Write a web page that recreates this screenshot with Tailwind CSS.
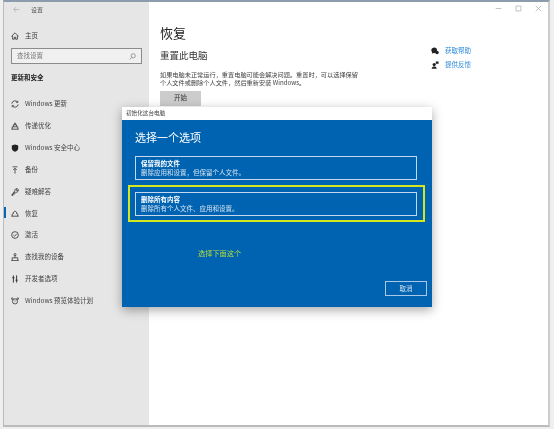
<!DOCTYPE html>
<html lang="zh-CN">
<head>
    <meta charset="UTF-8">
    <title>设置</title>
    <script src="https://cdn.jsdelivr.net/npm/@tailwindcss/browser@4"></script>
</head>
<body class="w-[554px] h-[429px] overflow-hidden bg-[#efefef] font-['Noto_Sans_CJK_SC','Noto_Sans',sans-serif] text-[#333]">

<!-- Settings window -->
<div class="relative ml-[3px] w-[547px] h-[427px] flex border-t-2 border-t-[#8d9bae] border-l border-l-[#bbb] border-r-2 border-r-[#ccc] border-b-2 border-b-[#bbb] bg-white blur-[0.35px]">

    <!-- Sidebar -->
    <aside class="w-[145px] shrink-0 bg-[#e6e6e6] flex flex-col">
        <div class="flex items-center h-[13px] mt-px pl-[9px] text-[6px] text-[#555]">
            <svg class="w-[7px] h-[7px] text-[#aaa]" viewBox="0 0 10 10" fill="none" stroke="currentColor" stroke-width="1"><path d="M9 5H1M4.500 1.500 1 5l3.500 3.500"/></svg>
            <span class="ml-[11px]">设置</span>
        </div>
        <div class="flex items-center gap-[6px] mt-[13px] pl-[7px] h-[14px] text-[6.500px]">
            <svg class="w-[8px] h-[8px] text-[#333]" viewBox="0 0 10 10" fill="none" stroke="currentColor" stroke-width="1"><path d="M.5 5.500 5 1l4.500 4.500M2 4.500V9h2.200V6.500h1.600V9H8V4.500"/></svg>
            <span>主页</span>
        </div>
        <div class="mx-[7px] mt-[5px] h-[16px] border border-[#8c8c8c] bg-[#f0f0f0] flex items-center justify-between px-[5px] text-[6.500px] text-[#777]">
            <span>查找设置</span>
            <svg class="w-[7px] h-[7px] text-[#777]" viewBox="0 0 10 10" fill="none" stroke="currentColor" stroke-width="1"><circle cx="6" cy="4" r="3"/><path d="M4 6.200 1 9.200"/></svg>
        </div>
        <div class="pl-[7px] mt-[8px] h-[12px] flex items-center text-[6.500px] font-bold text-[#222]">更新和安全</div>

        <nav class="mt-[9px] flex flex-col text-[6.500px] text-[#444]">
            <div class="relative h-[21.900px] pl-[7px] flex items-center gap-[6px]">
                <svg class="w-[8px] h-[8px] text-[#333]" viewBox="0 0 10 10" fill="none" stroke="currentColor" stroke-width="1"><path d="M1 4.500A4 4 0 0 1 8.300 2.800M9 5.500A4 4 0 0 1 1.700 7.200M8.500 1v2h-2M1.500 9V7h2"/></svg>
                <span>Windows 更新</span>
            </div>
            <div class="relative h-[21.900px] pl-[7px] flex items-center gap-[6px]">
                <svg class="w-[8px] h-[8px] text-[#333]" viewBox="0 0 10 10" fill="none" stroke="currentColor" stroke-width="1"><path d="M.5 9h9M1.500 9V6h7v3M3 6V3.500h4V6M4 3.500 5 1l1 2.500"/></svg>
                <span>传递优化</span>
            </div>
            <div class="relative h-[21.900px] pl-[7px] flex items-center gap-[6px]">
                <svg class="w-[8px] h-[8px] text-[#222]" viewBox="0 0 10 10" fill="currentColor"><path d="M5 .5 9 2v3.200C9 7.500 7.200 9 5 9.700 2.800 9 1 7.500 1 5.200V2z"/></svg>
                <span>Windows 安全中心</span>
            </div>
            <div class="relative h-[21.900px] pl-[7px] flex items-center gap-[6px]">
                <svg class="w-[8px] h-[8px] text-[#333]" viewBox="0 0 10 10" fill="none" stroke="currentColor" stroke-width="1"><path d="M2 1h6M5 9.500V3M2.800 5 5 2.800 7.200 5"/></svg>
                <span>备份</span>
            </div>
            <div class="relative h-[21.900px] pl-[7px] flex items-center gap-[6px]">
                <svg class="w-[8px] h-[8px] text-[#333]" viewBox="0 0 10 10" fill="none" stroke="currentColor" stroke-width="1"><path d="M1 9 5.200 4.800M4.800 3.500A2.500 2.500 0 0 1 8 .8L6.500 2.500l1 1L9.200 2A2.500 2.500 0 0 1 6.500 5.200L2.500 9.300 1 9z"/></svg>
                <span>疑难解答</span>
            </div>
            <div class="relative h-[21.900px] pl-[7px] flex items-center gap-[6px]">
                <div class="absolute left-0 top-[5px] w-[2px] h-[11px] bg-[#0067b8]"></div>
                <svg class="w-[8px] h-[8px] text-[#333]" viewBox="0 0 10 10" fill="none" stroke="currentColor" stroke-width="1"><path d="M.5 9h9M1.500 9V6.500L3 5.500M8.500 9V6.500L7 5.500M3 6A2.200 2.200 0 1 1 7 6"/></svg>
                <span>恢复</span>
            </div>
            <div class="relative h-[21.900px] pl-[7px] flex items-center gap-[6px]">
                <svg class="w-[8px] h-[8px] text-[#333]" viewBox="0 0 10 10" fill="none" stroke="currentColor" stroke-width="1"><circle cx="5" cy="5" r="4.200"/><path d="M3 5.200 4.500 6.500 7.200 3.500"/></svg>
                <span>激活</span>
            </div>
            <div class="relative h-[21.900px] pl-[7px] flex items-center gap-[6px]">
                <svg class="w-[8px] h-[8px] text-[#333]" viewBox="0 0 10 10" fill="none" stroke="currentColor" stroke-width="1"><path d="M.5 9.500h9M1.500 9.500V6h7v3.500M5 6V3"/><circle cx="5" cy="2" r="1.300"/></svg>
                <span>查找我的设备</span>
            </div>
            <div class="relative h-[21.900px] pl-[7px] flex items-center gap-[6px]">
                <svg class="w-[8px] h-[8px] text-[#333]" viewBox="0 0 10 10" fill="none" stroke="currentColor" stroke-width="1.200"><path d="M3 .5v9M7 .5v9M1.500 3.500h3M5.500 6.500h3"/></svg>
                <span>开发者选项</span>
            </div>
            <div class="relative h-[21.900px] pl-[7px] flex items-center gap-[6px]">
                <svg class="w-[8px] h-[8px] text-[#333]" viewBox="0 0 10 10" fill="none" stroke="currentColor" stroke-width="1"><circle cx="5" cy="5.500" r="3.200"/><circle cx="1.500" cy="2" r="1"/><circle cx="8.500" cy="2" r="1"/><path d="M3.500 5h.8M5.700 5h.8"/></svg>
                <span>Windows 预览体验计划</span>
            </div>
        </nav>
    </aside>

    <!-- Main panel -->
    <main class="flex-1 pl-[11px] relative">
        <div class="flex justify-end gap-[13px] pr-[6px] pt-[3px] text-[#aaa]">
            <svg class="w-[7px] h-[7px]" viewBox="0 0 10 10" fill="none" stroke="currentColor" stroke-width="1"><path d="M1 5h8"/></svg>
            <svg class="w-[7px] h-[7px]" viewBox="0 0 10 10" fill="none" stroke="currentColor" stroke-width="1"><path d="M1.500 1.500h7v7h-7z"/></svg>
            <svg class="w-[7px] h-[7px]" viewBox="0 0 10 10" fill="none" stroke="currentColor" stroke-width="1"><path d="M1 1l8 8M9 1 1 9"/></svg>
        </div>
        <div class="flex mt-[11px]">
            <div class="w-[271px]">
                <h1 class="text-[13px] leading-[19px] text-[#222]">恢复</h1>
                <h2 class="mt-[6px] text-[9.500px] leading-[14px] text-[#333]">重置此电脑</h2>
                <p class="mt-[9px] text-[6.200px] leading-[8.300px] whitespace-nowrap text-[#444]">如果电脑未正常运行&#65292;重置电脑可能会解决问题。重置时&#65292;可以选择保留<br>个人文件或删除个人文件&#65292;然后重新安装 Windows。</p>
                <button class="block mt-[3px] w-[41px] h-[15px] bg-[#cccccc] text-[6.500px] text-[#333]">开始</button>
            </div>
            <div class="mt-[21px] text-[6.500px] text-[#2b88d8]">
                <div class="flex items-center h-[14px] gap-[6px]">
                    <svg class="w-[8px] h-[8px] text-[#222]" viewBox="0 0 10 10" fill="currentColor"><path d="M4 .5a3.500 3.500 0 0 0-2.500 6L1 8.500l2-1A3.500 3.500 0 0 0 7.500 4 3.500 3.500 0 0 0 4 .5z"/><circle cx="7.500" cy="7" r="2.200"/></svg>
                    <span>获取帮助</span>
                </div>
                <div class="flex items-center h-[14px] gap-[6px]">
                    <svg class="w-[8px] h-[8px] text-[#222]" viewBox="0 0 10 10" fill="currentColor"><circle cx="4" cy="4.500" r="2"/><path d="M.8 9.800C1 7.500 2.500 6.800 4 6.800s3 .7 3.200 3zM6 .5h3.500v3H7L6 4.500z"/></svg>
                    <span>提供反馈</span>
                </div>
            </div>
        </div>
    </main>

    <!-- Reset dialog, sits over the settings window -->
    <div class="absolute left-[118px] top-[105px] w-[310px] h-[200px] flex flex-col shadow-[0_3px_10px_rgba(0,0,0,0.35)]">
        <div class="h-[13px] shrink-0 bg-white flex items-center pl-[4px] text-[5.600px] text-[#444]">初始化这台电脑</div>
        <div class="flex-1 bg-[#0063b1] text-white flex flex-col">
            <div class="pl-[13px] mt-[9px] text-[11px] leading-[16px]">选择一个选项</div>
            <div class="ml-[13px] mt-[11px] w-[282px] h-[24px] border border-[#c4d9ee] pl-[5px] flex flex-col justify-center">
                <div class="text-[6.500px] leading-[9px] font-bold">保留我的文件</div>
                <div class="text-[6.500px] leading-[9px] text-[#d5e4f2]">删除应用和设置&#65292;但保留个人文件。</div>
            </div>
            <div class="ml-[6px] mt-[5px] w-[297px] h-[37px] border-2 border-[#d4e61e] flex items-center pl-[5px]">
                <div class="w-[282px] h-[24px] border border-[#c4d9ee] pl-[5px] flex flex-col justify-center">
                    <div class="text-[6.500px] leading-[9px] font-bold">删除所有内容</div>
                    <div class="text-[6.500px] leading-[9px] text-[#d5e4f2]">删除所有个人文件、应用和设置。</div>
                </div>
            </div>
            <div class="ml-[76px] mt-[21px] text-[7.200px] leading-[20px] text-[#b5dc3c]">选择下面这个</div>
            <div class="mt-[18px] ml-[263px] w-[42px] h-[15px] border border-[#a9c8e6] flex items-center justify-center text-[6.500px] text-[#d5e4f2]">取消</div>
        </div>
    </div>
</div>

</body>
</html>
